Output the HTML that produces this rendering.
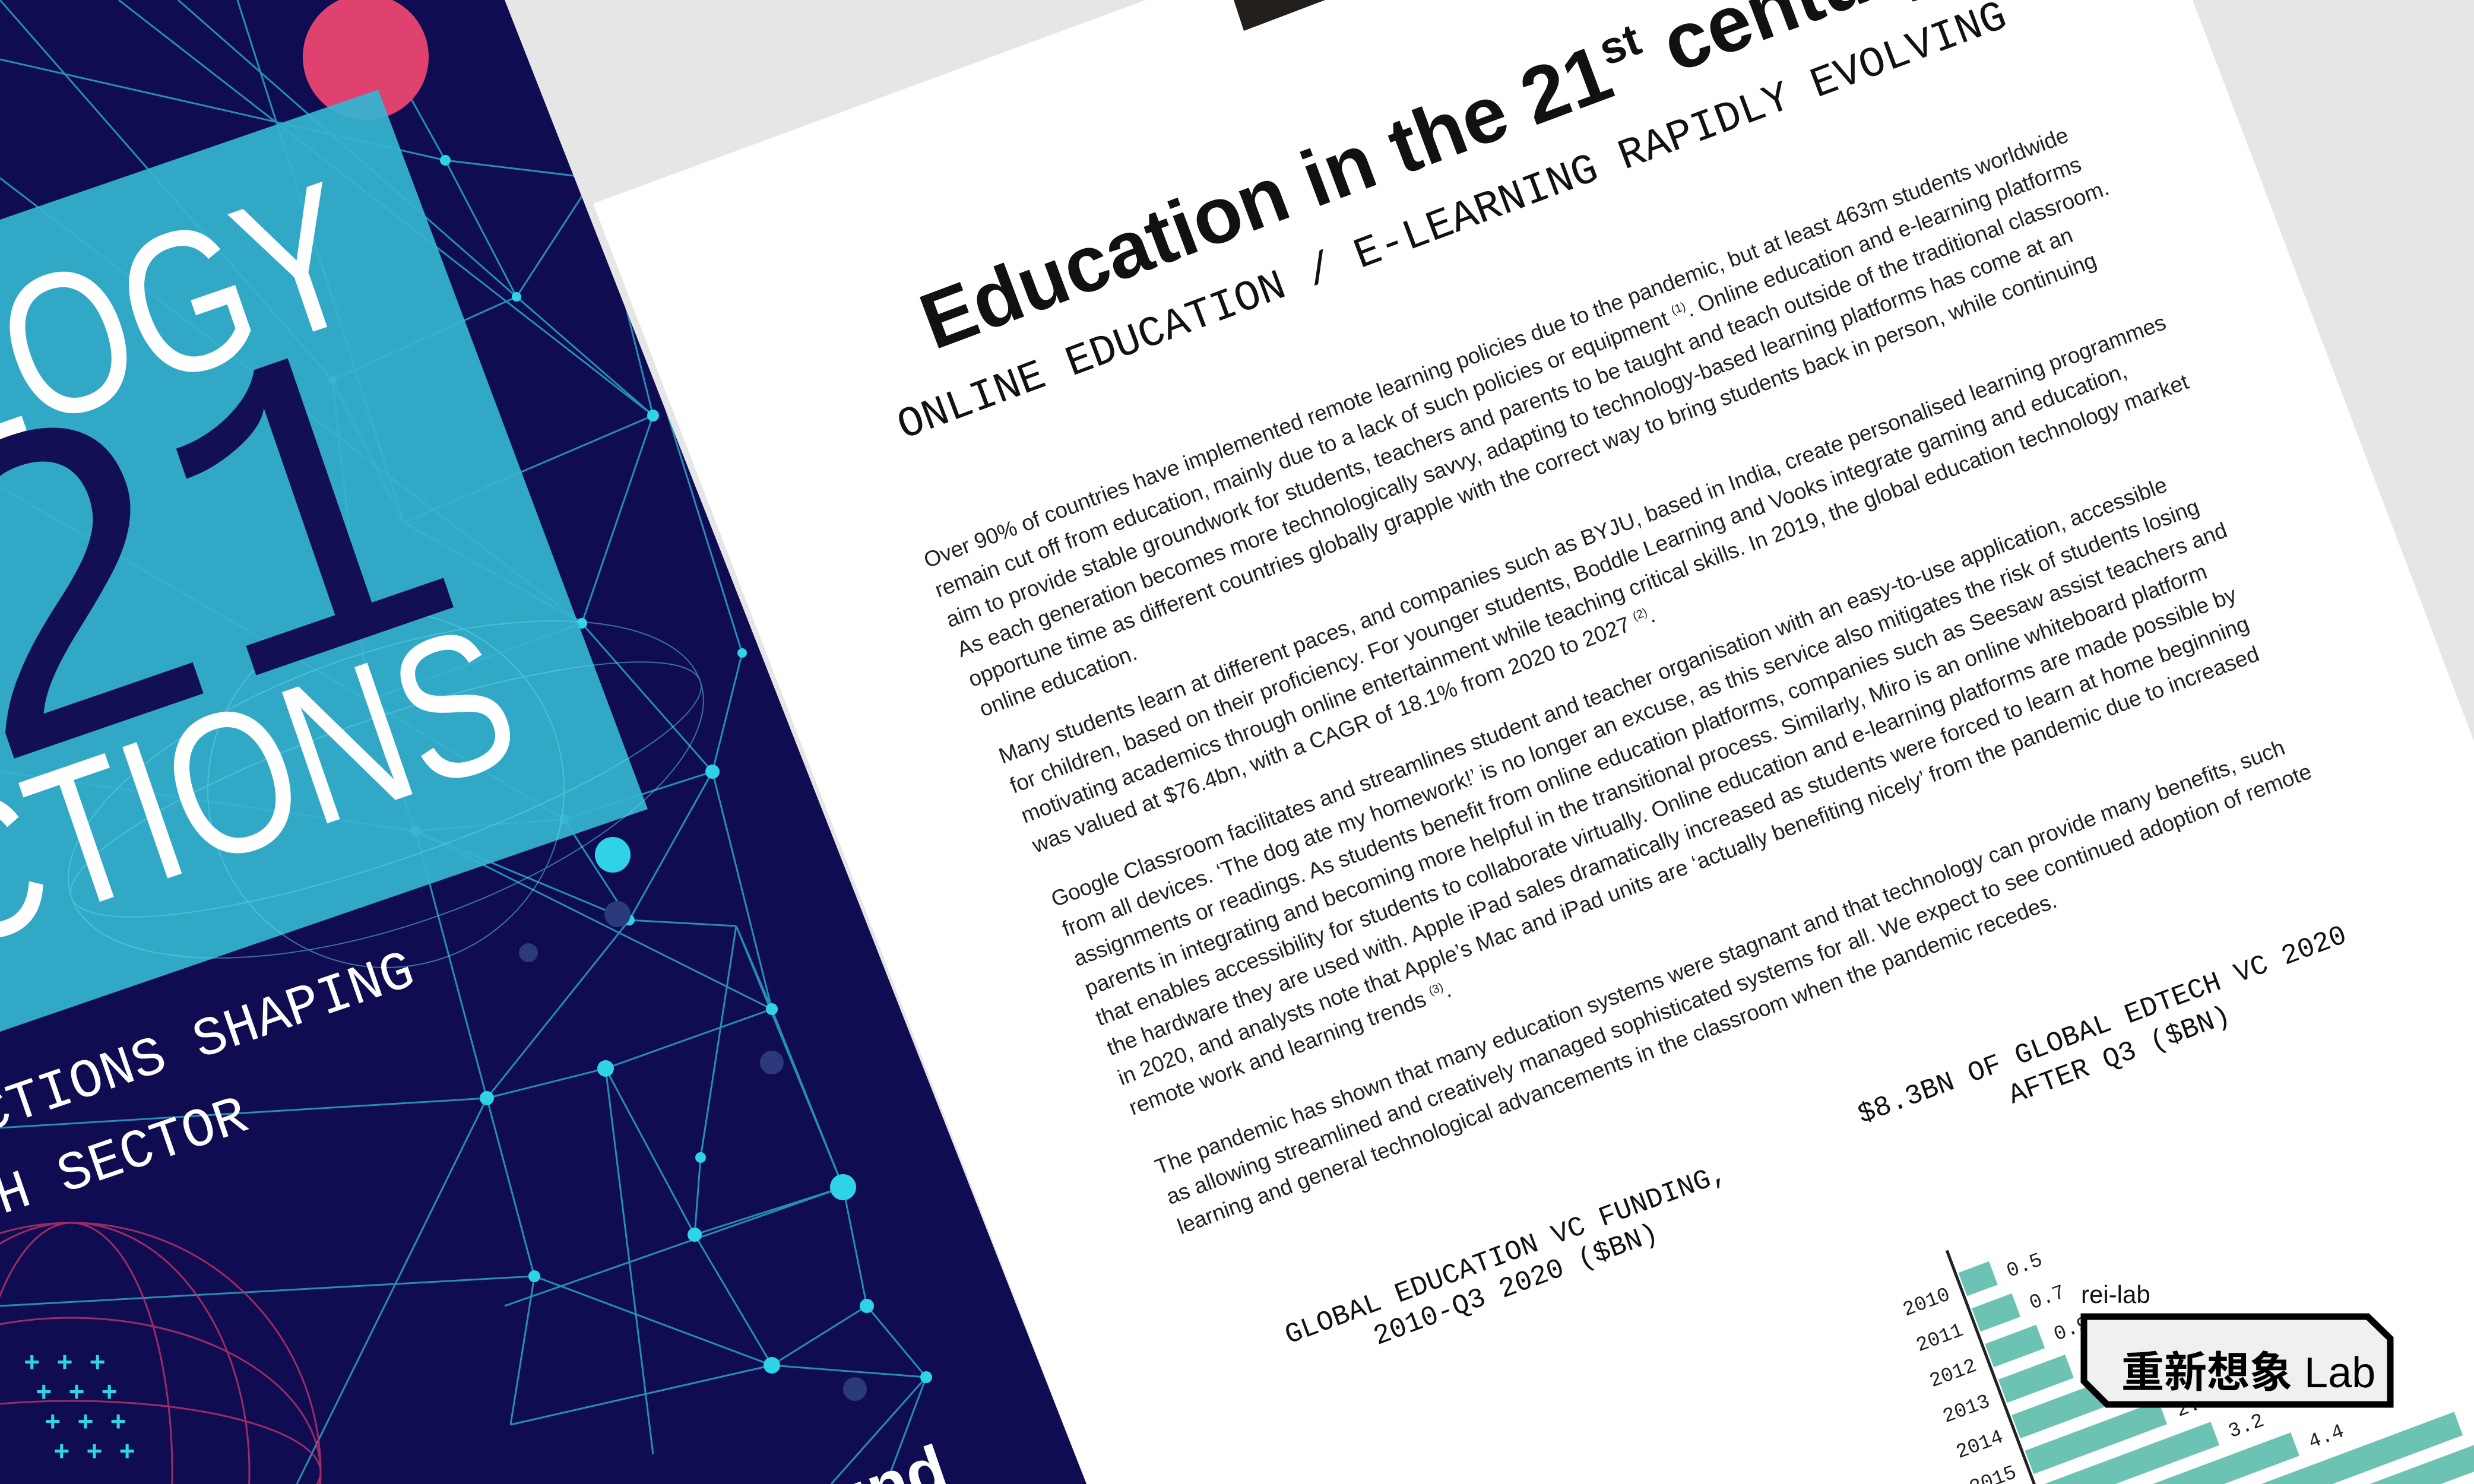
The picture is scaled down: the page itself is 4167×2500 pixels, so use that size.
<!DOCTYPE html>
<html><head><meta charset="utf-8"><style>
html,body{margin:0;padding:0;background:#e6e6e6;width:4167px;height:2500px;overflow:hidden;}
svg{display:block}
</style></head><body>
<svg width="4167" height="2500" viewBox="0 0 4167 2500" xmlns="http://www.w3.org/2000/svg">
<defs>
<clipPath id="navy"><polygon points="0,0 850,0 1830,2500 0,2500"/></clipPath>
</defs>
<rect width="4167" height="2500" fill="#e6e6e6"/>
<polygon points="999,343 1930,0 3693,0 4167,1249 4167,2500 1830,2500" fill="#ffffff"/>
<polygon points="2078,0 2232,0 2095,52" fill="#231f1c"/>

<g transform="translate(1573,590) rotate(-20.5)" fill="#1a1a1a">
<text x="0" y="0" font-family="Liberation Sans, sans-serif" font-weight="bold" font-size="134" fill="#111">Education in the 21<tspan font-size="76" dy="-52">st</tspan><tspan dy="52"> century</tspan></text>
<text x="-100" y="122" font-family="Liberation Mono, monospace" font-size="72" fill="#111">ONLINE EDUCATION / E-LEARNING RAPIDLY EVOLVING</text>
<g font-family="Liberation Sans, sans-serif" font-size="37" fill="#222">
<text x="-139" y="340">Over 90% of countries have implemented remote learning policies due to the pandemic, but at least 463m students worldwide</text>
<text x="-139" y="393.5">remain cut off from education, mainly due to a lack of such policies or equipment <tspan font-size="20" dy="-14">(1)</tspan><tspan dy="14">. Online education and e-learning platforms</tspan></text>
<text x="-139" y="447">aim to provide stable groundwork for students, teachers and parents to be taught and teach outside of the traditional classroom.</text>
<text x="-139" y="500.5">As each generation becomes more technologically savvy, adapting to technology-based learning platforms has come at an</text>
<text x="-139" y="554">opportune time as different countries globally grapple with the correct way to bring students back in person, while continuing</text>
<text x="-139" y="607.5">online education.</text>

<text x="-136" y="693">Many students learn at different paces, and companies such as BYJU, based in India, create personalised learning programmes</text>
<text x="-136" y="746.5">for children, based on their proficiency. For younger students, Boddle Learning and Vooks integrate gaming and education,</text>
<text x="-136" y="800">motivating academics through online entertainment while teaching critical skills. In 2019, the global education technology market</text>
<text x="-136" y="853.5">was valued at $76.4bn, with a CAGR of 18.1% from 2020 to 2027 <tspan font-size="20" dy="-14">(2)</tspan><tspan dy="14">.</tspan></text>

<text x="-138" y="950">Google Classroom facilitates and streamlines student and teacher organisation with an easy-to-use application, accessible</text>
<text x="-138" y="1003.5">from all devices. ‘The dog ate my homework!’ is no longer an excuse, as this service also mitigates the risk of students losing</text>
<text x="-138" y="1057">assignments or readings. As students benefit from online education platforms, companies such as Seesaw assist teachers and</text>
<text x="-138" y="1110.5">parents in integrating and becoming more helpful in the transitional process. Similarly, Miro is an online whiteboard platform</text>
<text x="-138" y="1164">that enables accessibility for students to collaborate virtually. Online education and e-learning platforms are made possible by</text>
<text x="-138" y="1217.5">the hardware they are used with. Apple iPad sales dramatically increased as students were forced to learn at home beginning</text>
<text x="-138" y="1271">in 2020, and analysts note that Apple’s Mac and iPad units are ‘actually benefiting nicely’ from the pandemic due to increased</text>
<text x="-138" y="1324.5">remote work and learning trends <tspan font-size="20" dy="-14">(3)</tspan><tspan dy="14">.</tspan></text>

<text x="-132" y="1434">The pandemic has shown that many education systems were stagnant and that technology can provide many benefits, such</text>
<text x="-132" y="1487.5">as allowing streamlined and creatively managed sophisticated systems for all. We expect to see continued adoption of remote</text>
<text x="-132" y="1541">learning and general technological advancements in the classroom when the pandemic recedes.</text>
</g>
<g font-family="Liberation Mono, monospace" font-size="47" fill="#111">
<text x="-26" y="1777">GLOBAL EDUCATION VC FUNDING,</text>
<text x="113" y="1831">2010-Q3 2020 ($BN)</text>
<text x="1008" y="1767">$8.3BN OF GLOBAL EDTECH VC 2020</text>
<text x="1257" y="1825">AFTER Q3 ($BN)</text>
</g>
<line x1="1067" y1="2018" x2="1067" y2="2800" stroke="#222" stroke-width="5"/>
<g fill="#6cc3b3">
<rect x="1072" y="2060" width="55" height="42"/>
<rect x="1072" y="2124" width="72" height="42"/>
<rect x="1072" y="2188" width="92" height="42"/>
<rect x="1072" y="2252" width="120" height="42"/>
<rect x="1072" y="2316" width="180" height="42"/>
<rect x="1072" y="2380" width="240" height="42"/>
<rect x="1072" y="2444" width="310" height="42"/>
<rect x="1072" y="2508" width="430" height="42"/>
<rect x="1072" y="2572" width="700" height="42"/>
<rect x="1072" y="2636" width="830" height="42"/>
</g>
<g font-family="Liberation Mono, monospace" font-size="34" fill="#222">
<text x="1150" y="2097">0.5</text>
<text x="1167" y="2161">0.7</text>
<text x="1187" y="2225">0.9</text>
<text x="1215" y="2289">1.2</text>
<text x="1275" y="2353">1.8</text>
<text x="1335" y="2417">2.4</text>
<text x="1405" y="2481">3.2</text>
<text x="1525" y="2545">4.4</text>
<g text-anchor="end">
<text x="1045" y="2097">2010</text>
<text x="1045" y="2161">2011</text>
<text x="1045" y="2225">2012</text>
<text x="1045" y="2289">2013</text>
<text x="1045" y="2353">2014</text>
<text x="1045" y="2417">2015</text>
<text x="1045" y="2481">2016</text>
</g>
</g>
</g>

<g clip-path="url(#navy)">
<rect width="1900" height="2500" fill="#0f0c52"/>
<g stroke="#2fc6e0" stroke-width="3" opacity="0.7" fill="none">
<path d="M750,270 L870,500 M750,270 L1000,300 M870,500 L1100,700 M870,500 L560,640 M1100,700 L980,1050 M1100,700 L1000,300 M980,1050 L1200,1300 M980,1050 L680,880 M980,1050 L620,1180 M1200,1300 L1250,1100 M1200,1300 L1060,1550 M1060,1550 L1240,1560 M1060,1550 L700,1400 M1060,1550 L950,1380 M820,1850 L1020,1800 M820,1850 L900,2150 M1020,1800 L1300,1700 M1020,1800 L1170,2080 M1300,1700 L1420,2000 M1300,1700 L1240,1560 M1420,2000 L1170,2080 M1420,2000 L1460,2200 M1170,2080 L1300,2300 M1170,2080 L1180,1950 M1300,2300 L1560,2320 M1300,2300 L900,2150 M1560,2320 L1500,2480 M900,2150 L860,2400 M700,1400 L620,1180 M700,1400 L820,1850 M620,1180 L560,640 M560,640 L680,880 M680,880 L1100,700 M1180,1950 L1240,1560 M1460,2200 L1560,2320 M860,2400 L1300,2300 M950,1380 L1200,1300 M950,1380 L700,1400 M0,100 L750,270 M300,0 L870,500 M0,820 L620,1180 M600,0 L750,270 M850,2200 L1420,2000 M1100,2450 L1020,1800 M700,1400 L1300,1700 M0,0 L560,640 M200,0 L1100,700 M0,300 L980,1050 M400,0 L680,880 M0,1300 L700,1400 M0,1900 L820,1850 M500,2500 L820,1850 M0,2200 L900,2150 M1400,2500 L1560,2320 M1000,300 L1250,1100 M1000,300 L870,500 M1240,1560 L1420,2000 M620,1180 L950,1380 M1060,1550 L820,1850 M1460,2200 L1300,2300 M1200,1300 L1300,1700"/>
</g>
<g fill="#2fd3e8">
<circle cx="750" cy="270" r="9"/><circle cx="870" cy="500" r="8"/><circle cx="1100" cy="700" r="10"/><circle cx="980" cy="1050" r="9"/><circle cx="1200" cy="1300" r="12"/><circle cx="1060" cy="1550" r="9"/><circle cx="820" cy="1850" r="12"/><circle cx="1020" cy="1800" r="14"/><circle cx="1300" cy="1700" r="10"/><circle cx="1420" cy="2000" r="22"/><circle cx="1170" cy="2080" r="12"/><circle cx="1300" cy="2300" r="14"/><circle cx="1560" cy="2320" r="10"/><circle cx="900" cy="2150" r="10"/><circle cx="700" cy="1400" r="9"/><circle cx="1032" cy="1440" r="30"/><circle cx="1180" cy="1950" r="9"/><circle cx="1460" cy="2200" r="12"/><circle cx="950" cy="1380" r="8"/><circle cx="1250" cy="1100" r="8"/><circle cx="560" cy="640" r="7"/>
</g>
<g fill="#2a3a7a"><circle cx="1040" cy="1540" r="22"/><circle cx="1300" cy="1790" r="20"/><circle cx="1440" cy="2340" r="20"/><circle cx="890" cy="1605" r="16"/></g>
<g stroke="#b8306a" stroke-width="3" fill="none" opacity="0.85">
<ellipse cx="120" cy="2480" rx="420" ry="420"/>
<ellipse cx="120" cy="2480" rx="300" ry="420"/>
<ellipse cx="120" cy="2480" rx="170" ry="420"/>
<ellipse cx="120" cy="2480" rx="420" ry="260"/>
<ellipse cx="120" cy="2480" rx="420" ry="120"/>
</g>
<g font-family="Liberation Mono, monospace" font-size="46" fill="#2fd3e8" font-weight="bold">
<text x="40" y="2310">+ + +</text><text x="60" y="2360">+ + +</text><text x="75" y="2410">+ + +</text><text x="90" y="2460">+ + +</text>
</g>
<circle cx="616" cy="96" r="106" fill="#e0426f"/>
<polygon points="637,151 1091,1363 0,1738 0,370" fill="#35b5d0" opacity="0.93"/>
<g stroke="#5fd8ec" stroke-width="2" fill="none" opacity="0.5">
<ellipse cx="650" cy="1330" rx="560" ry="230" transform="rotate(-19 650 1330)"/>
<ellipse cx="650" cy="1330" rx="560" ry="120" transform="rotate(-19 650 1330)"/>
<ellipse cx="650" cy="1330" rx="300" ry="300"/>
</g>
<g transform="rotate(-19)">
<text transform="translate(420,700) scale(0.8,1)" text-anchor="end" font-family="Liberation Sans, sans-serif" font-size="340" fill="#ffffff">TECHNOLOGY</text>
<text x="425" y="1216" text-anchor="end" font-family="Liberation Sans, sans-serif" font-size="740" fill="#120f55">2<tspan font-family="Liberation Mono, monospace">1</tspan></text>
<text transform="translate(425,1491) scale(0.8,1)" text-anchor="end" font-family="Liberation Sans, sans-serif" font-size="340" fill="#ffffff">PREDICTIONS</text>
<text x="125" y="1795" text-anchor="end" font-family="Liberation Mono, monospace" font-size="92" fill="#ffffff">21 PREDICTIONS SHAPING</text>
<text x="-220" y="1935" text-anchor="end" font-family="Liberation Mono, monospace" font-size="92" fill="#ffffff">THE TECH SECTOR</text>
<text x="700" y="2890" text-anchor="end" font-family="Liberation Sans, sans-serif" font-weight="bold" font-size="110" fill="#ffffff">Sound</text>
</g>
</g>

<text x="3505" y="2195" font-family="Liberation Sans, sans-serif" font-size="42" fill="#111">rei-lab</text>
<polygon points="3510,2218 3988,2218 4026,2255 4026,2366 3549,2366 3510,2327" fill="#f0f0f0" stroke="#000" stroke-width="11" stroke-linejoin="miter"/>
<text x="3573" y="2337" font-family="Liberation Sans, 'Noto Sans CJK SC', sans-serif" font-size="72" fill="#000"><tspan font-weight="bold" font-family="'Noto Sans CJK SC', sans-serif">重新想象</tspan> Lab</text>
</svg>
</body></html>
